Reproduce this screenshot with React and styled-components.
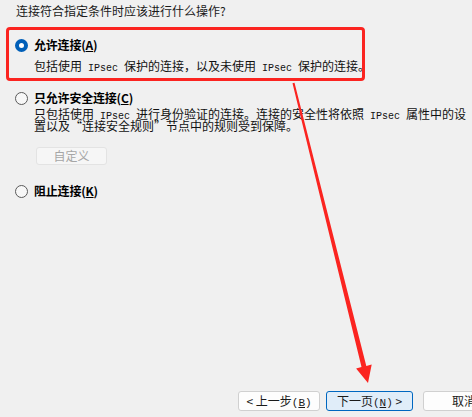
import React from 'react'
import styled, { createGlobalStyle } from 'styled-components'

const GlobalStyle = createGlobalStyle`
  html, body {
    margin: 0;
    padding: 0;
    background: #f0f0f0;
    overflow: hidden;
  }
  body {
    font-family: "Noto Sans CJK SC", "Noto Sans", sans-serif;
    font-size: 12px;
    color: #000;
  }
`;

const Page = styled.div`
  position: relative;
  height: 417px;
  display: flex;
  flex-direction: column;
`;

const Content = styled.div`
  padding: 3px 0 0 15px;
  display: flex;
  flex-direction: column;
`;

const Title = styled.div`
  line-height: 16px;
  margin-left: 1px;
  color: #1a1a1a;
`;

const Option = styled.div`
  position: relative;
  margin-top: ${p => p.$gap}px;
  display: flex;
  flex-direction: column;

  &::after {
    content: '';
    display: ${p => (p.$marked ? 'block' : 'none')};
    position: absolute;
    left: -9px;
    top: -10px;
    bottom: -8px;
    width: 359px;
    border: 3px solid #fb2420;
    border-radius: 4px;
    box-sizing: border-box;
  }
`;

const LabelRow = styled.label`
  display: flex;
  align-items: center;
  gap: 6px;
  height: 16px;
`;

const Radio = styled.span`
  width: 13px;
  height: 13px;
  border-radius: 50%;
  box-sizing: border-box;
  flex-shrink: 0;
  background: ${p => (p.$checked ? '#fff' : '#f7f7f7')};
  border: ${p => (p.$checked ? '4px solid #005fb8' : '1px solid #5a5a5a')};
`;

const Label = styled.span`
  font-weight: 700;
  line-height: 16px;
  letter-spacing: -0.2px;
`;

const Desc = styled.div`
  margin: ${p => p.$top}px 0 0 19px;
  white-space: nowrap;
  color: #111;
`;

const Line = styled.div`
  height: ${p => p.$h}px;
  line-height: ${p => p.$h}px;
`;

const Latin = styled.span`
  font-family: "Liberation Mono", "DejaVu Sans Mono", monospace;
  font-size: 10px;
  line-height: 10px;
  white-space: pre;
`;

const SmallButton = styled.button`
  margin: 15px 0 0 21px;
  width: 71px;
  height: 18px;
  padding: 0;
  border: 1px solid #e3e3e3;
  border-radius: 3px;
  background: #f6f6f6;
  color: #a6a6a6;
  font-family: inherit;
  font-size: 12px;
  line-height: 16px;
`;

const Footer = styled.div`
  margin-top: auto;
  padding: 0 0 6px 238px;
  display: flex;
  align-items: center;
`;

const Button = styled.button`
  flex-shrink: 0;
  margin-left: ${p => p.$gap}px;
  width: ${p => p.$w}px;
  height: 20px;
  padding: 0;
  border: 1px solid ${p => (p.$primary ? '#0067c0' : '#d0d0d0')};
  border-radius: 3px;
  background: ${p => (p.$primary ? '#e0edf9' : '#fdfdfd')};
  color: #1a1a1a;
  font-family: "Noto Sans CJK SC", sans-serif;
  font-size: 12px;
  line-height: 18px;
  white-space: pre;
`;

const Key = styled.span`
  font-family: "Liberation Mono", monospace;
  font-size: 11px;
`;

const Overlay = styled.svg`
  position: absolute;
  left: 0;
  top: 0;
  pointer-events: none;
`;

const Arrow = () => (
  <Overlay width="472" height="417" viewBox="0 0 472 417">
    <polygon
      fill="#fb2420"
      points="292.5,83.2 294.5,82.8 366.3,365.9 371.7,364.6 368,383 356.1,368.4 361.5,367.1"
    />
  </Overlay>
)

const App = () => {
  return (
    <Page>
      <GlobalStyle />
      <Content>
        <Title>连接符合指定条件时应该进行什么操作?</Title>

        <Option $gap={18} $marked>
          <LabelRow>
            <Radio $checked />
            <Label>允许连接(<u>A</u>)</Label>
          </LabelRow>
          <Desc $top={6}>
            <Line $h={14}>
              包括使用<Latin> IPsec </Latin>保护的连接，以及未使用<Latin> IPsec </Latin>保护的连接。
            </Line>
          </Desc>
        </Option>

        <Option $gap={17}>
          <LabelRow>
            <Radio />
            <Label>只允许安全连接(<u>C</u>)</Label>
          </LabelRow>
          <Desc $top={2}>
            <Line $h={12}>
              只包括使用<Latin> IPsec </Latin>进行身份验证的连接。连接的安全性将依照<Latin> IPsec </Latin>属性中的设
            </Line>
            <Line $h={12}>置以及“连接安全规则”节点中的规则受到保障。</Line>
          </Desc>
          <SmallButton disabled>自定义</SmallButton>
        </Option>

        <Option $gap={18}>
          <LabelRow>
            <Radio />
            <Label>阻止连接(<u>K</u>)</Label>
          </LabelRow>
        </Option>
      </Content>

      <Footer>
        <Button $w={82} $gap={0}>{'< 上一步'}<Key>(<u>B</u>)</Key></Button>
        <Button $w={87} $gap={6} $primary>下一页<Key>(<u>N</u>)</Key>{' >'}</Button>
        <Button $w={82} $gap={10}>取消</Button>
      </Footer>

      <Arrow />
    </Page>
  )
}

export default App
